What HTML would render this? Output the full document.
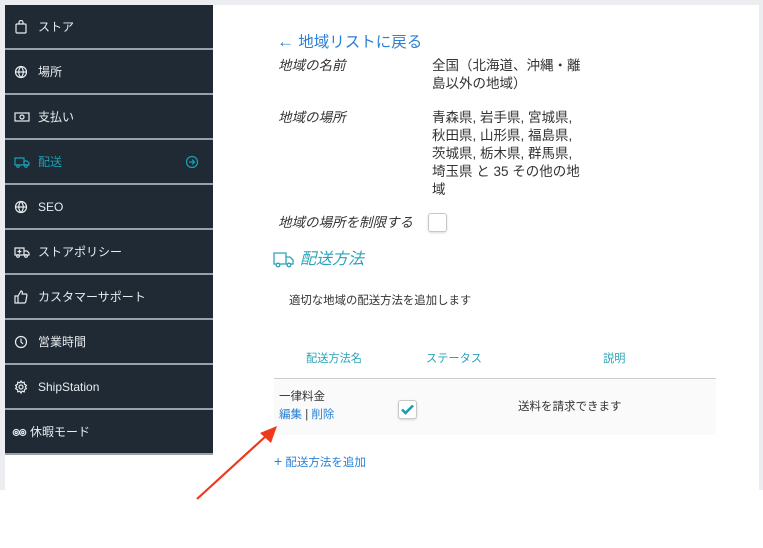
<!DOCTYPE html>
<html><head><meta charset="utf-8"><style>
*{margin:0;padding:0;box-sizing:border-box}
body{width:763px;height:548px;background:#fff;position:relative;overflow:hidden;font-family:"Liberation Sans","Noto Sans CJK JP",sans-serif;color:#333}
.bg{position:absolute;left:0;top:0;width:763px;height:490px;background:#ebedf0}
.panel{position:absolute;left:5px;top:5px;width:754px;height:485px;background:#fff}
.side{position:absolute;left:5px;top:5px;width:208px}
.item{height:45px;background:#1f2a35;border-bottom:2px solid #9aa1a8;color:#e8ecef;font-size:12px;display:flex;align-items:center;padding-left:9px;position:relative}
.item svg{width:14px;height:14px;margin-right:10px;flex:none}
.item.act{color:#1ba0b5}
.t{position:absolute;font-size:13.5px;line-height:18px;white-space:nowrap}
.lab{font-style:italic;color:#333}
.blue{color:#2a80d6}
.teal{color:#2aa3b8}
</style></head><body>
<div class="bg"></div>
<div class="panel"></div>
<div class="side">
<div class="item"><svg viewBox="0 0 14 14" fill="none" stroke="#e8ecef" stroke-width="1.2"><rect x="2" y="4" width="10" height="9" rx="1"/><path d="M5 4V2.5a2 2 0 0 1 4 0V4"/></svg>ストア</div>
<div class="item"><svg viewBox="0 0 14 14" fill="none" stroke="#e8ecef" stroke-width="1.2"><circle cx="7" cy="7" r="5.5"/><path d="M1.5 7h11M7 1.5c-3 3-3 8 0 11M7 1.5c3 3 3 8 0 11"/></svg>場所</div>
<div class="item"><svg viewBox="0 0 16 14" fill="none" stroke="#e8ecef" stroke-width="1.2" style="width:16px;margin-right:8px"><rect x="1" y="3" width="14" height="8"/><circle cx="8" cy="7" r="2"/></svg>支払い</div>
<div class="item act"><svg viewBox="0 0 16 14" fill="none" stroke="#1ba0b5" stroke-width="1.2" style="width:16px;margin-right:8px"><path d="M1 3h9v7H1zM10 6h3l2 2v2h-5"/><circle cx="4" cy="11" r="1.3"/><circle cx="12" cy="11" r="1.3"/></svg>配送<svg viewBox="0 0 14 14" fill="none" stroke="#1ba0b5" stroke-width="1.2" style="position:absolute;right:14px;margin:0"><circle cx="7" cy="7" r="5.5"/><path d="M4 7h5M7 4.5L9.5 7 7 9.5"/></svg></div>
<div class="item"><svg viewBox="0 0 14 14" fill="none" stroke="#e8ecef" stroke-width="1.2"><circle cx="7" cy="7" r="5.5"/><path d="M1.5 7h11M7 1.5c-3 3-3 8 0 11M7 1.5c3 3 3 8 0 11"/></svg>SEO</div>
<div class="item"><svg viewBox="0 0 16 14" fill="none" stroke="#e8ecef" stroke-width="1.2" style="width:16px;margin-right:8px"><path d="M1 3h9v7H1zM10 6h3l2 2v2h-5M5.5 4.5v4M3.5 6.5h4"/><circle cx="4" cy="11" r="1.3"/><circle cx="12" cy="11" r="1.3"/></svg>ストアポリシー</div>
<div class="item"><svg viewBox="0 0 14 14" fill="none" stroke="#e8ecef" stroke-width="1.2"><path d="M1 6h3v7H1zM4 6l3-5c1.5 0 1.5 1 1.2 3H12c1 0 1 1 .8 2l-1 5.5c-.2.8-.6 1.5-1.5 1.5H4"/></svg>カスタマーサポート</div>
<div class="item"><svg viewBox="0 0 14 14" fill="none" stroke="#e8ecef" stroke-width="1.2"><circle cx="7" cy="7" r="5.5"/><path d="M7 3.5V7l2 2"/></svg>営業時間</div>
<div class="item"><svg viewBox="0 0 14 14" fill="none" stroke="#e8ecef" stroke-width="1.2"><circle cx="7" cy="7" r="2"/><path d="M7 1l1.2 1.8 2-.6.3 2.1 1.9 1L11.3 7l1.1 1.7-1.9 1-.3 2.1-2-.6L7 13l-1.2-1.8-2 .6-.3-2.1-1.9-1L2.7 7 1.6 5.3l1.9-1 .3-2.1 2 .6z"/></svg>ShipStation</div>
<div class="item" style="padding-left:7px"><svg viewBox="0 0 16 14" fill="none" stroke="#e8ecef" stroke-width="1.2" style="width:15px;margin-right:3px"><circle cx="4.5" cy="7.5" r="3.2"/><circle cx="11.5" cy="7.5" r="3.2"/><circle cx="4.5" cy="7.5" r="1.2"/><circle cx="11.5" cy="7.5" r="1.2"/></svg>休暇モード</div>
</div>

<div class="t blue" style="left:277px;top:32px;font-size:15.5px;line-height:20px"><span style="font-size:17px">←</span> 地域リストに戻る</div>
<div class="t lab" style="left:278px;top:57px">地域の名前</div>
<div class="t" style="left:432px;top:57px">全国（北海道、沖縄・離<br>島以外の地域）</div>
<div class="t lab" style="left:278px;top:109px">地域の場所</div>
<div class="t" style="left:432px;top:109px">青森県, 岩手県, 宮城県,<br>秋田県, 山形県, 福島県,<br>茨城県, 栃木県, 群馬県,<br>埼玉県 と 35 その他の地<br>域</div>
<div class="t lab" style="left:278px;top:214px">地域の場所を制限する</div>
<div style="position:absolute;left:428px;top:213px;width:19px;height:19px;border:1px solid #c8c8c8;border-radius:3px;background:#fff;box-shadow:0 1px 2px rgba(0,0,0,.15)"></div>
<svg style="position:absolute;left:273px;top:251px" width="22" height="18" viewBox="0 0 22 18" fill="none" stroke="#2aa3b8" stroke-width="1.3"><path d="M1 2h12v11H1zM13 6h4l3 3v4h-7"/><circle cx="5" cy="14" r="1.8" fill="#fff"/><circle cx="16" cy="14" r="1.8" fill="#fff"/></svg>
<div class="t teal" style="left:300px;top:249px;font-size:16px;line-height:22px;font-style:italic">配送方法</div>
<div class="t" style="left:289px;top:292px;font-size:11.4px">適切な地域の配送方法を追加します</div>
<div class="t teal" style="left:306px;top:350px;font-size:11.2px">配送方法名</div>
<div class="t teal" style="left:426px;top:350px;font-size:11.2px">ステータス</div>
<div class="t teal" style="left:603px;top:350px;font-size:11.2px">説明</div>
<div style="position:absolute;left:274px;top:378px;width:442px;height:1px;background:#cfcfcf"></div>
<div style="position:absolute;left:274px;top:379px;width:442px;height:56px;background:#fafafa"></div>
<div class="t" style="left:279px;top:388px;font-size:11.5px">一律料金</div>
<div class="t" style="left:279px;top:406px;font-size:11.5px"><span class="blue">編集</span> | <span class="blue">削除</span></div>
<div style="position:absolute;left:398px;top:400px;width:19px;height:19px;border:1px solid #c8c8c8;border-radius:3px;background:#fff;box-shadow:0 1px 2px rgba(0,0,0,.15)"></div>
<svg style="position:absolute;left:400px;top:402px" width="15" height="15" viewBox="0 0 15 15"><path d="M2 7.5l3.5 3.5L13 3.5" fill="none" stroke="#1a9db3" stroke-width="2.6"/></svg>
<div class="t" style="left:518px;top:398px;font-size:11.5px">送料を請求できます</div>
<div class="t blue" style="left:274px;top:452px;font-size:11.5px"><span style="font-size:14px">+</span> 配送方法を追加</div>
<svg style="position:absolute;left:0;top:0" width="763" height="548"><line x1="197" y1="499" x2="266" y2="436" stroke="#ee3a1b" stroke-width="2.2"/><polygon points="277,426 260,433 271,443" fill="#ee3a1b"/></svg>
</body></html>
